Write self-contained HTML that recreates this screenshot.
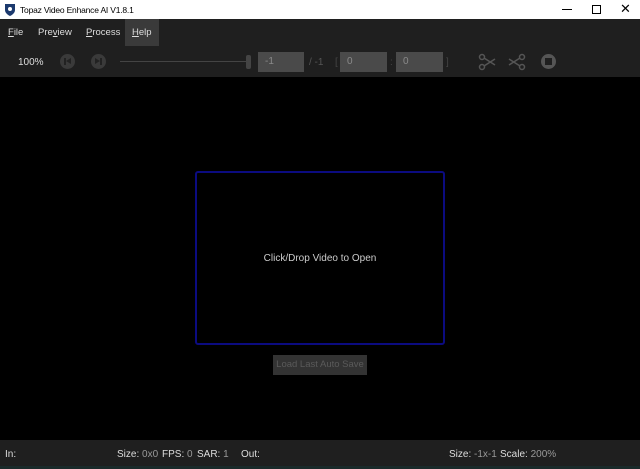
<!DOCTYPE html>
<html><head><style>
*{margin:0;padding:0;box-sizing:border-box}
body{width:640px;height:469px;overflow:hidden;background:#000;font-family:"Liberation Sans",sans-serif;position:relative}
.a{position:absolute}
.tb{left:0;top:0;width:640px;height:19px;background:#fff;font-size:10px;color:#000}
.menu{left:0;top:19px;width:640px;height:27px;background:#1f1f1f}
.tool{left:0;top:46px;width:640px;height:31px;background:#1f1f1f}
.mi{top:19px;height:27px;line-height:27px;font-size:9.5px;color:#ddd}
.inp{top:52px;height:20px;background:#4a4a4a;color:#8a8a8a;font-size:10px;line-height:20px;padding-left:7px}
.circ{width:15px;height:15px;border-radius:50%;background:#3a3a3a;top:54px}
.st{left:0;top:440px;width:640px;height:26px;background:#1f1f1f;font-size:10px;color:#ddd}
.st span{position:absolute;top:9px;white-space:nowrap}
.g{color:#999;font-style:normal}
</style></head><body>
<div class="a tb">
<svg class="a" style="left:4px;top:3px" width="12" height="13" viewBox="0 0 12 13"><path d="M1 1h10v6c0 3-3 5-5 6-2-1-5-3-5-6z" fill="#1c3a6e"/><circle cx="6" cy="6" r="2" fill="#fff"/></svg>
<span class="a" style="left:20px;top:5px;font-size:8.5px;letter-spacing:-0.2px;white-space:nowrap">Topaz Video Enhance AI V1.8.1</span>
<span class="a" style="left:562px;top:9px;width:10px;height:1px;background:#000"></span>
<span class="a" style="left:592px;top:5px;width:9px;height:9px;border:1px solid #000"></span>
<span class="a" style="left:620px;top:1px;font-size:13px">✕</span>
</div>
<div class="a menu"></div>
<div class="a" style="left:125px;top:19px;width:34px;height:27px;background:#3a3a3a"></div>
<span class="a mi" style="left:8px"><u>F</u>ile</span>
<span class="a mi" style="left:38px">Pre<u>v</u>iew</span>
<span class="a mi" style="left:86px"><u>P</u>rocess</span>
<span class="a mi" style="left:132px"><u>H</u>elp</span>
<div class="a tool"></div>
<span class="a" style="left:18px;top:57px;font-size:10px;color:#ddd">100%</span>
<div class="a circ" style="left:60px"></div>
<div class="a" style="left:64px;top:58px;width:2px;height:7px;background:#222"></div>
<div class="a" style="left:66px;top:58px;width:0;height:0;border-top:3.5px solid transparent;border-bottom:3.5px solid transparent;border-right:5px solid #222"></div>
<div class="a circ" style="left:91px"></div>
<div class="a" style="left:95px;top:58px;width:0;height:0;border-top:3.5px solid transparent;border-bottom:3.5px solid transparent;border-left:5px solid #222"></div>
<div class="a" style="left:100px;top:58px;width:2px;height:7px;background:#222"></div>
<div class="a" style="left:120px;top:61px;width:128px;height:1px;background:#444"></div>
<div class="a" style="left:246px;top:55px;width:5px;height:14px;background:#444;border-radius:2px"></div>
<div class="a inp" style="left:258px;width:46px">-1</div>
<span class="a" style="left:309px;top:57px;font-size:10px;color:#555">/ -1</span>
<span class="a" style="left:335px;top:57px;font-size:10px;color:#444">[</span>
<div class="a inp" style="left:340px;width:47px">0</div>
<span class="a" style="left:390px;top:57px;font-size:10px;color:#444">:</span>
<div class="a inp" style="left:396px;width:47px">0</div>
<span class="a" style="left:446px;top:57px;font-size:10px;color:#444">]</span>
<svg class="a" style="left:478px;top:53px" width="18" height="18" viewBox="0 0 18 18" fill="none" stroke="#555" stroke-width="1.5"><circle cx="4" cy="4" r="2.5"/><circle cx="4" cy="14" r="2.5"/><path d="M6 5l11 7M6 13l11-7"/></svg>
<svg class="a" style="left:508px;top:53px" width="18" height="18" viewBox="0 0 18 18" fill="none" stroke="#555" stroke-width="1.5"><circle cx="14" cy="4" r="2.5"/><circle cx="14" cy="14" r="2.5"/><path d="M12 5L1 12M12 13L1 6"/></svg>
<div class="a" style="left:541px;top:54px;width:15px;height:15px;border-radius:50%;background:#555"></div>
<div class="a" style="left:545px;top:58px;width:7px;height:7px;background:#1f1f1f"></div>
<div class="a" style="left:195px;top:171px;width:250px;height:174px;border:2px solid #0b0b80;border-radius:3px"></div>
<span class="a" style="left:195px;top:253px;width:250px;text-align:center;font-size:10px;color:#ccc">Click/Drop Video to Open</span>
<div class="a" style="left:273px;top:355px;width:94px;height:20px;background:#333;color:#5a5a5a;font-size:9.5px;line-height:20px;text-align:center;white-space:nowrap">Load Last Auto Save</div>
<div class="a st">
<span style="left:5px">In:</span>
<span style="left:117px">Size: <i class="g">0x0</i></span>
<span style="left:162px">FPS: <i class="g">0</i></span>
<span style="left:197px">SAR: <i class="g">1</i></span>
<span style="left:241px">Out:</span>
<span style="left:449px">Size: <i class="g">-1x-1</i></span>
<span style="left:500px">Scale: <i class="g">200%</i></span>
</div>
<div class="a" style="left:0;top:466px;width:640px;height:3px;background:#1a2a2a"></div>
</body></html>
